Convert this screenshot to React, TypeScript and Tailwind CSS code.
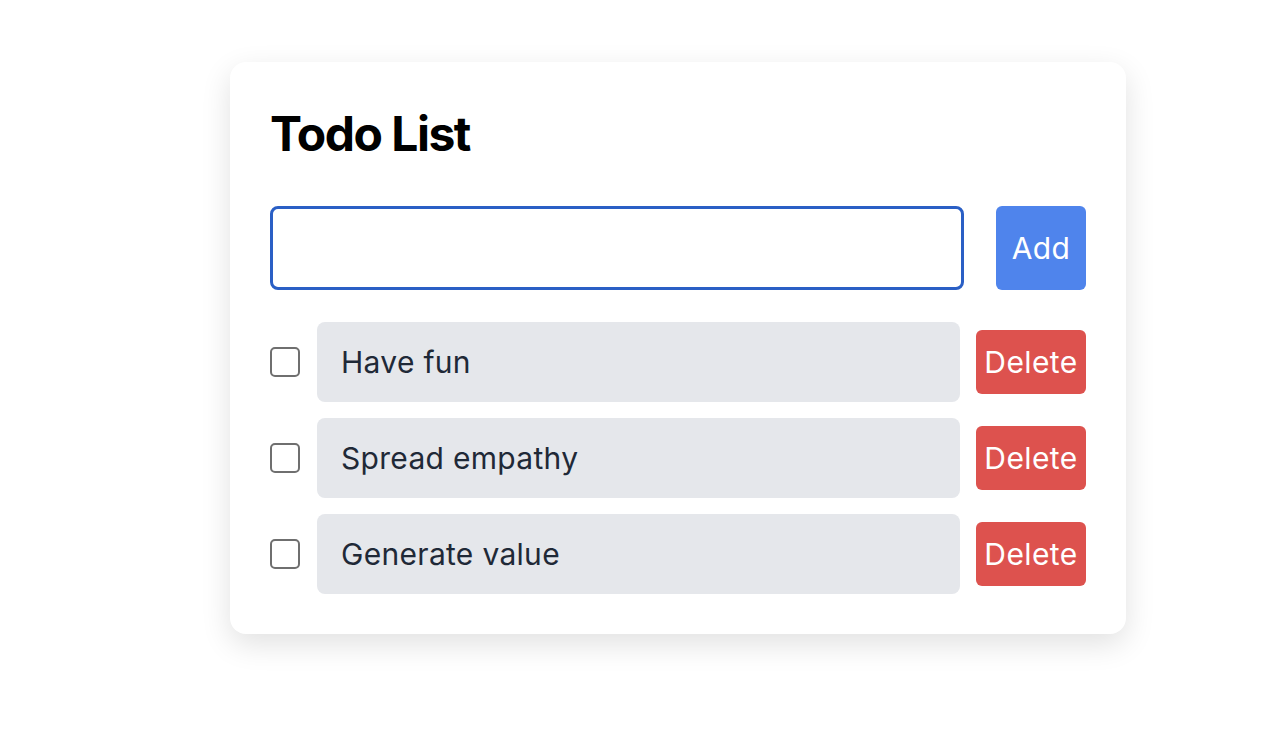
import { useState } from "react";

const initialTodos = ["Have fun", "Spread empathy", "Generate value"];

export default function App() {
  const [todos, setTodos] = useState(initialTodos);
  const [text, setText] = useState("");

  return (
    <div className="min-h-screen bg-white font-['Inter',sans-serif] pt-[62px] pl-[230px]">
      <div className="w-[896px] rounded-2xl bg-white p-10 shadow-[0_10px_30px_rgba(0,0,0,0.12)]">
        <h1 className="text-[48px] font-bold leading-[64px] tracking-[-1.5px] text-black">Todo List</h1>
        <div className="mt-10 flex gap-8">
          <input
            value={text}
            onChange={(e) => setText(e.target.value)}
            className="h-[84px] w-[694px] rounded-lg border-[3px] border-[#2a5fc5] px-4 text-[30px] outline-none"
          />
          <button
            onClick={() => {
              if (text.trim()) setTodos([...todos, text.trim()]);
              setText("");
            }}
            className="h-[84px] w-[90px] rounded-md bg-[#4f84ec] text-[30px] tracking-[0.3px] text-white"
          >
            Add
          </button>
        </div>
        <ul className="mt-8 flex flex-col gap-4">
          {todos.map((todo, i) => (
            <li key={i} className="flex h-20 items-center">
              <span className="h-[30px] w-[30px] shrink-0 rounded-[5px] border-2 border-[#6f6f6f]" />
              <div className="ml-[17px] flex h-20 w-[643px] items-center rounded-lg bg-[#e5e7eb] pl-6 text-[30px] tracking-[0.3px] text-[#1f2937]">
                {todo}
              </div>
              <button
                onClick={() => setTodos(todos.filter((_, j) => j !== i))}
                className="ml-4 h-16 w-[110px] rounded-md bg-[#dd524e] text-[30px] tracking-[0.4px] text-white"
              >
                Delete
              </button>
            </li>
          ))}
        </ul>
      </div>
    </div>
  );
}
